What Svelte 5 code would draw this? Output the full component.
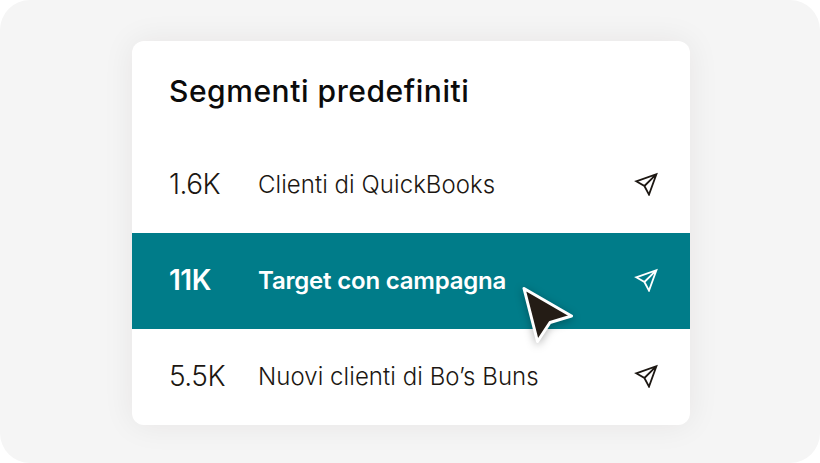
<script>
  const rows = [
    { count: "1.6K", name: "Clienti di QuickBooks" },
    { count: "11K", name: "Target con campagna", active: true },
    { count: "5.5K", name: "Nuovi clienti di Bo’s Buns" }
  ];
</script>

<div class="page">
  <div class="card">
    <h2>Segmenti predefiniti</h2>
    {#each rows as row}
      <div class="row" class:active={row.active}>
        <span class="count">{row.count}</span>
        <span class="name">{row.name}</span>
        <svg class="send" width="24" height="24" viewBox="0 0 24 24" fill="none">
          <path d="M2.2 9.3 L22.4 2.2 L15 22.6 L10.4 14 Z M10.4 14 L22.4 2.2" stroke="currentColor" stroke-width="1.8" stroke-linejoin="miter" />
        </svg>
      </div>
    {/each}
    <svg class="cursor" width="62" height="66" viewBox="0 0 62 66">
      <path d="M9 7.5 L56.5 35 L35 41.5 L22.5 60.5 Z" fill="#241c15" stroke="#fff" stroke-width="3" stroke-linejoin="round" />
    </svg>
  </div>
</div>

<style>
  :global(body) {
    background: #fff;
  }

  .page {
    width: 820px;
    height: 463px;
    box-sizing: border-box;
    padding: 41px 130px 38px 132px;
    background: #f5f5f5;
    border-radius: 30px;
    font-family: "Inter", "Liberation Sans", sans-serif;
  }

  .card {
    position: relative;
    height: 384px;
    background: #fff;
    border-radius: 12px;
    box-shadow: 0 0 32px rgba(36, 28, 21, 0.07);
    color: #1c1712;
  }

  h2 {
    margin: 0;
    height: 96px;
    box-sizing: border-box;
    padding: 32px 37px 0;
    font-size: 30px;
    line-height: 36px;
    font-weight: 500;
    letter-spacing: 0.55px;
    color: #0b0b0b;
  }

  .row {
    height: 96px;
    display: flex;
    align-items: center;
    padding: 0 32px 2px 37px;
    box-sizing: border-box;
    font-weight: 300;
  }

  .count {
    width: 89px;
    font-size: 28px;
    letter-spacing: -0.5px;
  }

  .name {
    flex: 1;
    font-size: 24px;
    letter-spacing: 0.05px;
  }

  .active {
    background: #007c89;
    color: #fff;
    font-weight: 600;
  }

  .active .name {
    letter-spacing: -0.2px;
  }

  .cursor {
    position: absolute;
    left: 383px;
    top: 240px;
    filter: drop-shadow(0 2px 4px rgba(0, 0, 0, 0.3));
  }
</style>
